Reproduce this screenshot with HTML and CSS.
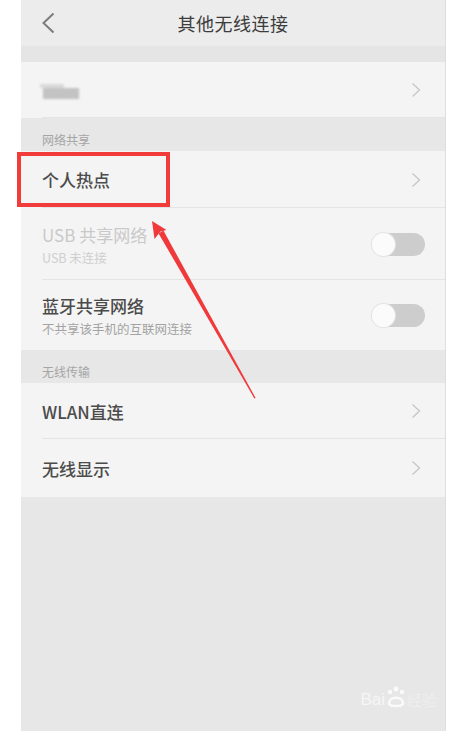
FILE: index.html
```html
<!DOCTYPE html>
<html lang="zh-CN">
<head>
    <meta charset="UTF-8">
    <meta name="viewport" content="width=device-width, initial-scale=1.0">
    <title>其他无线连接</title>
    <link rel="stylesheet" href="styles.css">
</head>
<body>
    <div class="screen">
        <div class="header">
            <svg class="back" width="14" height="22" viewBox="0 0 14 22"><polyline points="12.5,1.5 2.5,11 12.5,20.5" fill="none" stroke="#7c7c7c" stroke-width="2"/></svg>
            <div class="title">其他无线连接</div>
        </div>
        <div class="gap"></div>

        <div class="row">
            <div class="blur-name"><span class="b1"></span><span class="b2"></span></div>
            <svg class="chev" width="10" height="16" viewBox="0 0 10 16"><polyline points="1.5,1.5 8.5,8 1.5,14.5" fill="none" stroke="#c6c6c6" stroke-width="1.3"/></svg>
        </div>

        <div class="section">网络共享</div>
        <div class="row tall-1">
            <div class="label">个人热点</div>
            <svg class="chev" width="10" height="16" viewBox="0 0 10 16"><polyline points="1.5,1.5 8.5,8 1.5,14.5" fill="none" stroke="#c6c6c6" stroke-width="1.3"/></svg>
        </div>
        <div class="row two-line disabled">
            <div class="texts">
                <div class="label">USB 共享网络</div>
                <div class="sub">USB 未连接</div>
            </div>
            <div class="toggle"><span class="knob"></span></div>
        </div>
        <div class="row two-line last">
            <div class="texts">
                <div class="label">蓝牙共享网络</div>
                <div class="sub">不共享该手机的互联网连接</div>
            </div>
            <div class="toggle"><span class="knob"></span></div>
        </div>

        <div class="section">无线传输</div>
        <div class="row">
            <div class="label">WLAN直连</div>
            <svg class="chev" width="10" height="16" viewBox="0 0 10 16"><polyline points="1.5,1.5 8.5,8 1.5,14.5" fill="none" stroke="#c6c6c6" stroke-width="1.3"/></svg>
        </div>
        <div class="row tall-2 last">
            <div class="label">无线显示</div>
            <svg class="chev" width="10" height="16" viewBox="0 0 10 16"><polyline points="1.5,1.5 8.5,8 1.5,14.5" fill="none" stroke="#c6c6c6" stroke-width="1.3"/></svg>
        </div>

        <div class="watermark">
            <span class="wm-bai">Bai</span>
            <svg width="22" height="24" viewBox="0 0 22 24">
                <circle cx="11" cy="4" r="2.4" fill="#fafafa"/>
                <circle cx="5" cy="7" r="2.2" fill="#fafafa"/>
                <circle cx="17" cy="7" r="2.2" fill="#fafafa"/>
                <path d="M4 18 C4 11 18 11 18 18 C18 22 4 22 4 18 Z" fill="none" stroke="#fafafa" stroke-width="2.4"/>
            </svg>
            <span class="wm-jy">经验</span>
        </div>
    </div>

    <svg class="marks" width="465" height="734" viewBox="0 0 465 734">
        <rect x="19" y="154" width="149" height="51" fill="none" stroke="#f23b3b" stroke-width="4"/>
        <polygon points="255.6,398 254.4,398.6 158.6,233.4 163.4,230.6" fill="#f0393b"/>
        <polygon points="152,221 166.5,230 160.5,231.5 154.5,239" fill="#f0393b"/>
    </svg>
</body>
</html>
```

FILE: styles.css
```css
body {
    margin: 0;
    background: #ffffff;
    font-family: "Noto Sans CJK SC", "Noto Sans", sans-serif;
}
.screen {
    width: 424px;
    height: 731px;
    margin-left: 21px;
    background-color: #e7e7e7;
    border-right: 1px solid #dedede;
    display: flex;
    flex-direction: column;
}
.header {
    height: 46px;
    background-color: #ececec;
    display: flex;
    align-items: center;
    justify-content: center;
    position: relative;
}
.back {
    position: absolute;
    left: 20px;
    top: 12px;
}
.title {
    font-size: 18px;
    color: #3c3c3c;
    letter-spacing: 0.5px;
}
.gap {
    height: 16px;
    background-color: #e5e5e5;
}
.row {
    height: 56px;
    background-color: #f4f4f4;
    display: flex;
    align-items: center;
    justify-content: space-between;
    padding: 0 24px 0 21px;
    position: relative;
}
.row::after {
    content: "";
    position: absolute;
    left: 21px;
    right: 0;
    bottom: 0;
    height: 1px;
    background-color: #e4e4e4;
}
.row.last::after {
    display: none;
}
.tall-1 {
    height: 57px;
}
.tall-2 {
    height: 58px;
}
.two-line {
    height: 72px;
    padding-right: 20px;
}
.two-line.last {
    height: 70px;
}
.label {
    font-size: 17px;
    color: #4b4b4b;
    font-weight: 500;
}
.sub {
    font-size: 12.5px;
    color: #a3a3a3;
    margin-top: 1px;
}
.disabled .label {
    color: #c9c9c9;
    font-weight: 400;
}
.disabled .sub {
    color: #cfcfcf;
}
.section {
    height: 33px;
    box-sizing: border-box;
    padding: 13px 0 0 21px;
    font-size: 12px;
    color: #a5a5a5;
}
.blur-name {
    position: relative;
    width: 40px;
    height: 20px;
    filter: blur(1px);
}
.b1 {
    position: absolute;
    left: 1px;
    top: 8px;
    width: 36px;
    height: 11px;
    background: #c3c3c3;
}
.b2 {
    position: absolute;
    left: -2px;
    top: 4px;
    width: 24px;
    height: 4px;
    background: #dadada;
}
.toggle {
    width: 53px;
    height: 23px;
    border-radius: 12px;
    background-color: #cdcdcd;
    position: relative;
}
.knob {
    position: absolute;
    left: 0;
    top: 0;
    width: 23px;
    height: 23px;
    border-radius: 50%;
    background: #fbfbfb;
    box-shadow: 0 0 1px 1px #e2e2e2;
}
.watermark {
    margin-top: auto;
    margin-bottom: 22px;
    align-self: flex-end;
    margin-right: 8px;
    display: flex;
    align-items: flex-end;
    color: #f6f6f6;
}
.wm-bai {
    font-family: "Liberation Sans", sans-serif;
    font-size: 17px;
    line-height: 18px;
}
.wm-jy {
    font-size: 15px;
    line-height: 18px;
    color: #eeeeee;
}
.marks {
    position: absolute;
    left: 0;
    top: 0;
    pointer-events: none;
}
```
